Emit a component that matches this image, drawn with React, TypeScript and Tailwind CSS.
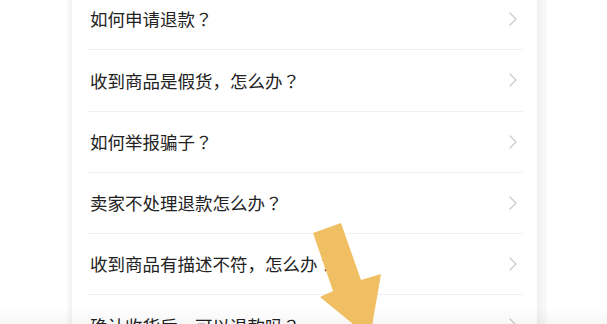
import React from "react";

const items = [
  "如何申请退款？",
  "收到商品是假货，怎么办？",
  "如何举报骗子？",
  "卖家不处理退款怎么办？",
  "收到商品有描述不符，怎么办？",
  "确认收货后，可以退款吗？",
];

function Chevron() {
  return (
    <svg width="10" height="14" viewBox="0 0 10 14" fill="none">
      <path d="M2 1 L8 7 L2 13" stroke="#c9c9c9" strokeWidth="1.2" strokeLinecap="round" strokeLinejoin="round" />
    </svg>
  );
}

function Label({ text }: { text: string }) {
  const parts = text.split("？");
  return (
    <span className="text-[17.5px] leading-none text-[#222] pl-[2px]">
      {parts.map((p, i) => (
        <React.Fragment key={i}>
          {p}
          {i < parts.length - 1 && (
            <span style={{ fontFamily: '"Noto Sans CJK JP", "Noto Sans CJK SC", sans-serif' }}>？</span>
          )}
        </React.Fragment>
      ))}
    </span>
  );
}

export default function App() {
  return (
    <div
      className="relative w-[607px] h-[324px] overflow-hidden bg-white"
      style={{ fontFamily: '"Noto Sans CJK SC", "Noto Sans", sans-serif' }}
    >
      <div className="flex h-full">
        <div className="w-[67px] bg-white" />
        <div className="w-[5px] bg-gradient-to-r from-[#fbfbfb] to-[#f2f2f2]" />
        <div className="w-[465px] bg-white">
          <div className="-mt-[11px] flex flex-col">
            {items.map((t, i) => (
              <div key={i} className="flex flex-col pl-[16px] pr-[14px]">
                <div className="flex h-[60.25px] items-center justify-between">
                  <Label text={t} />
                  <span className="mr-[5px] flex items-center">
                    <Chevron />
                  </span>
                </div>
                <div className="h-px bg-[#f1f1f1]" />
              </div>
            ))}
          </div>
        </div>
        <div className="w-[10px] bg-gradient-to-r from-[#f0f0f0] to-[#fafafa]" />
        <div className="flex-1 bg-white" />
      </div>
      <div className="absolute left-0 right-0 bottom-0 h-[16px] bg-gradient-to-b from-transparent to-[rgba(0,0,0,0.035)]" />
      <svg
        className="absolute left-0 top-0"
        width="607"
        height="324"
        viewBox="0 0 607 324"
      >
        <polygon
          points="313,233 341,223 361,280 381,274 370,338 320,297 333,291"
          fill="#F1BF63"
        />
      </svg>
    </div>
  );
}
